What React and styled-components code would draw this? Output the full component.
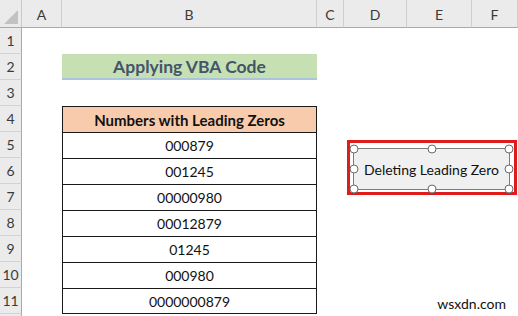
import React from 'react';
import styled, { createGlobalStyle } from 'styled-components';

const GlobalStyle = createGlobalStyle`
body {
  margin: 0;
  background: #ffffff;
  font-family: Lato, "Open Sans", sans-serif;
  overflow: hidden;
}
`

const Sheet = styled.div`
position: relative;
width: 518px;
height: 316px;
overflow: hidden;
display: grid;
grid-template-columns: 22px 40px 255px 27px 63px 65px 46px;
grid-template-rows: 28px;
grid-auto-rows: 26px;
`

const Corner = styled.div`
background: #ebebeb;
border-right: 1px solid #c9c9c9;
border-bottom: 1px solid #a9a9a9;
position: relative;
&::after {
  content: '';
  position: absolute;
  right: 3px;
  bottom: 3px;
  width: 0;
  height: 0;
  border-left: 14px solid transparent;
  border-bottom: 14px solid #c2c2c2;
}
`

const ColHead = styled.div`
background: #ebebeb;
border-right: 1px solid #cfcfcf;
border-bottom: 1px solid #a9a9a9;
display: flex;
align-items: center;
justify-content: center;
font-size: 14px;
color: #3a3a3a;
padding-top: 2px;
`

const RowHead = styled.div`
background: #ebebeb;
border-right: 1px solid #a9a9a9;
border-bottom: 1px solid #d2d2d2;
display: flex;
align-items: center;
justify-content: center;
font-size: 14px;
color: #3a3a3a;
`

const Cell = styled.div`
background: #ffffff;
`

const Title = styled.div`
background: #c6e0b4;
border-bottom: 2px solid #a9c4dc;
display: flex;
align-items: center;
justify-content: center;
font-size: 17.5px;
font-weight: 700;
color: #44546a;
padding-top: 1px;
`

const TableCell = styled.div`
background: ${(props) => (props.head ? '#f8cbad' : '#ffffff')};
border: 1px solid #1a1a1a;
border-bottom: ${(props) => (props.last ? '1px solid #1a1a1a' : 'none')};
display: flex;
align-items: center;
justify-content: center;
font-size: ${(props) => (props.head ? '15px' : '14px')};
font-weight: ${(props) => (props.head ? 700 : 400)};
color: #111111;
`

const Frame = styled.div`
position: absolute;
left: 347px;
top: 140px;
width: 170px;
height: 55px;
box-sizing: border-box;
border: 3px solid #e01b1b;
padding: 5px 4px 2px 3px;
display: flex;
`

const MacroButton = styled.div`
position: relative;
flex: 1;
background: #f0f0f0;
border: 1px solid #7d7d7d;
display: flex;
align-items: center;
justify-content: center;
font-size: 14px;
color: #111111;
`

const Handle = styled.span`
position: absolute;
width: 7px;
height: 7px;
border-radius: 50%;
background: #ffffff;
border: 1.5px solid #6a6a6a;
left: ${(props) => props.x};
top: ${(props) => props.y};
transform: translate(-50%, -50%);
`

const Watermark = styled.div`
position: absolute;
right: 10px;
bottom: 4px;
font-size: 14px;
color: #111111;
background: #ffffff;
padding: 0 2px;
`

const columns = ['A', 'B', 'C', 'D', 'E', 'F'];
const numbers = ['000879', '001245', '00000980', '00012879', '01245', '000980', '0000000879'];

const renderB = (row) => {
  if (row === 2) return <Title>Applying VBA Code</Title>;
  if (row === 4) return <TableCell head>Numbers with Leading Zeros</TableCell>;
  if (row >= 5 && row <= 11) {
    return <TableCell last={row === 11}>{numbers[row - 5]}</TableCell>;
  }
  return <Cell />;
};

const handles = [
  ['0%', '0%'], ['50%', '0%'], ['100%', '0%'],
  ['0%', '50%'], ['100%', '50%'],
  ['0%', '100%'], ['50%', '100%'], ['100%', '100%'],
];

const App = () => {
  const rows = Array.from({ length: 12 }, (_, i) => i + 1);
  return (
    <>
      <GlobalStyle />
      <Sheet>
        <Corner />
        {columns.map((c) => (
          <ColHead key={c}>{c}</ColHead>
        ))}
        {rows.map((r) => (
          <React.Fragment key={r}>
            <RowHead>{r <= 11 ? r : ''}</RowHead>
            <Cell />
            {renderB(r)}
            <Cell />
            <Cell />
            <Cell />
            <Cell />
          </React.Fragment>
        ))}
        <Frame>
          <MacroButton>
            Deleting Leading Zero
            {handles.map(([x, y]) => (
              <Handle key={x + y} x={x} y={y} />
            ))}
          </MacroButton>
        </Frame>
        <Watermark>wsxdn.com</Watermark>
      </Sheet>
    </>
  );
};

export default App;
